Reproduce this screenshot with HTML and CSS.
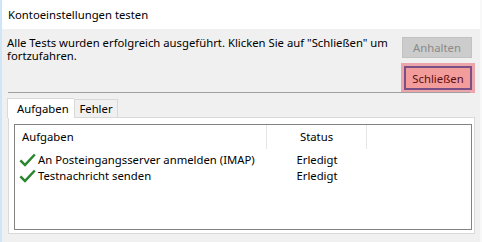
FILE: index.html
```html
<!DOCTYPE html>
<html>
<head>
<meta charset="utf-8">
<link rel="stylesheet" href="styles.css">
</head>
<body>
<div class="window">
  <div class="titlebar">Kontoeinstellungen testen</div>
  <div class="content">
    <div class="top">
      <div class="message">Alle Tests wurden erfolgreich ausgeführt. Klicken Sie auf "Schließen" um fortzufahren.</div>
      <div class="buttons">
        <div class="btn btn-disabled">Anhalten</div>
        <div class="focus-ring"><div class="btn btn-close">Schließen</div></div>
      </div>
    </div>
    <div class="separator"></div>
    <div class="tabs">
      <div class="tab tab-active">Aufgaben</div>
      <div class="tab tab-plain">Fehler</div>
    </div>
    <div class="panel">
      <div class="listbox">
        <div class="header">
          <div class="col-task">Aufgaben</div>
          <div class="col-status">Status</div>
          <div class="col-rest"></div>
        </div>
        <div class="row">
          <div class="col-task"><svg class="check" width="17" height="15" viewBox="0 0 16 14"><path d="M0.4 7.6 L2.2 6.0 L5.6 9.5 L14 0.6 L15.7 2.1 L5.7 12.9 Z" fill="#28862c"/></svg><span>An Posteingangsserver anmelden (IMAP)</span></div>
          <div class="col-status">Erledigt</div>
        </div>
        <div class="row">
          <div class="col-task"><svg class="check" width="17" height="15" viewBox="0 0 16 14"><path d="M0.4 7.6 L2.2 6.0 L5.6 9.5 L14 0.6 L15.7 2.1 L5.7 12.9 Z" fill="#28862c"/></svg><span>Testnachricht senden</span></div>
          <div class="col-status">Erledigt</div>
        </div>
      </div>
    </div>
  </div>
</div>
</body>
</html>
```

FILE: styles.css
```css
html, body {
  margin: 0;
  padding: 0;
}
body {
  width: 482px;
  height: 242px;
  overflow: hidden;
  background: #f0f0f0;
  font-family: "Noto Sans", "Open Sans", sans-serif;
  font-size: 11.3px;
  color: #000;
}
.window {
  box-sizing: border-box;
  width: 482px;
  height: 242px;
  border-left: 2px solid #cfe6f8;
  border-right: 2px solid #f8f8f8;
  display: flex;
  flex-direction: column;
}
.titlebar {
  background: #fff;
  height: 29px;
  line-height: 29px;
  padding-left: 6px;
  box-sizing: border-box;
  padding-bottom: 1px;
}
.content {
  flex: 1;
  display: flex;
  flex-direction: column;
  padding: 0 7px 0 4px;
}
.top {
  display: flex;
  height: 63px;
}
.message {
  flex: 1;
  padding: 7px 0 0 1px;
  line-height: 13px;
}
.buttons {
  display: flex;
  flex-direction: column;
  align-items: flex-end;
  padding-top: 8px;
}
.btn {
  box-sizing: border-box;
  text-align: center;
  white-space: nowrap;
}
.btn-disabled {
  width: 70px;
  height: 21px;
  line-height: 19px;
  background: #cccccc;
  border: 1px solid #c2c2c2;
  color: #8a8a8a;
  margin-right: 1px;
}
.focus-ring {
  margin-top: 5px;
  background: #eda5ac;
  padding: 3px;
  margin-right: -2px;
}
.btn-close {
  width: 68px;
  height: 24px;
  line-height: 21px;
  background: #f29c9c;
  border: 2px solid #7a4f86;
  color: #5a0d10;
}
.separator {
  height: 1px;
  background: #a0a0a0;
  margin: 0 3px 0 2px;
}
.tabs {
  display: flex;
  align-items: flex-end;
  height: 24px;
  margin-left: 1px;
  position: relative;
  z-index: 1;
}
.tab {
  box-sizing: border-box;
  height: 18px;
  line-height: 17px;
  border: 1px solid #d9d9d9;
  border-bottom: none;
  background: #f0f0f0;
}
.tab-plain {
  width: 44px;
  text-align: center;
}
.tab-active {
  height: 20px;
  line-height: 19px;
  width: 67px;
  padding: 0 0 0 9px;
  background: #fff;
  margin-bottom: -1px;
  border-right: none;
}
.panel {
  box-sizing: border-box;
  background: #fff;
  border: 1px solid #d9d9d9;
  margin-left: 2px;
  width: 467px;
  height: 117px;
  padding: 6px 2px 3px 5px;
}
.listbox {
  box-sizing: border-box;
  height: 106px;
  border: 1px solid #828282;
  background: #fff;
}
.header {
  display: flex;
  height: 24px;
  line-height: 24px;
}
.header .col-task {
  width: 252px;
  padding-left: 7px;
  box-sizing: border-box;
  border-right: 1px solid #e5e5e5;
}
.header .col-status {
  width: 99px;
  border-right: 1px solid #e5e5e5;
  text-align: center;
}
.row {
  display: flex;
  height: 16px;
  line-height: 16px;
  white-space: nowrap;
}
.header + .row {
  margin-top: 3px;
}
.row .col-task {
  width: 252px;
  display: flex;
  align-items: center;
  padding-left: 4px;
  box-sizing: border-box;
}
.check {
  margin-right: 2px;
  flex: none;
}
.row .col-status {
  width: 100px;
  text-align: center;
}
```
